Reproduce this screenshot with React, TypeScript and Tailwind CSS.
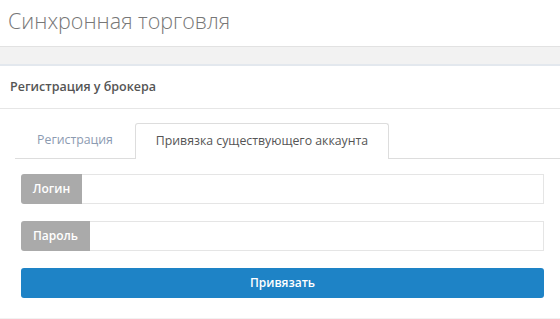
import React from 'react';

const App: React.FC = () => {
    return (
        <div className="w-[560px] h-[319px] overflow-hidden bg-white font-['Open_Sans',sans-serif]">
            <div className="h-[46px] pl-[8px] pt-[6px]">
                <h1 className="text-[21.5px] leading-[30px] font-light text-[#777]">Синхронная торговля</h1>
            </div>
            <div className="h-[20px] bg-[#f2f2f2] border-t border-[#e2e2e2] border-b-2 border-b-[#e3e8ee]"></div>
            <div className="bg-white">
                <div className="h-[43px] pl-[10px] flex items-center border-b border-[#e6e6e6]">
                    <span className="text-[12.5px] font-semibold text-[#555]">Регистрация у брокера</span>
                </div>
                <div className="pl-[15px] pt-[14px] h-[209px]">
                    <div className="flex items-end h-[36px] border-b border-[#dddddd]">
                        <div className="w-[120px] h-[35px] flex items-center justify-center text-[12.3px] text-[#8c9bb1]">
                            Регистрация
                        </div>
                        <div className="w-[254px] h-[36px] -mb-px flex items-center justify-center text-[12.3px] text-[#555] bg-white border border-b-0 border-[#dddddd] rounded-t-[3px]">
                            Привязка существующего аккаунта
                        </div>
                    </div>
                    <div className="pl-[6px] w-[529px] pt-[15px] flex flex-col gap-[17px]">
                        <div className="flex h-[30px]">
                            <div className="w-[61px] bg-[#aaaaaa] text-white text-[12px] font-semibold flex items-center justify-center rounded-l-[3px]">Логин</div>
                            <input className="flex-1 border border-l-0 border-[#e5e5e5] outline-none" />
                        </div>
                        <div className="flex h-[30px]">
                            <div className="w-[69px] bg-[#aaaaaa] text-white text-[12px] font-semibold flex items-center justify-center rounded-l-[3px]">Пароль</div>
                            <input type="password" className="flex-1 border border-l-0 border-[#e5e5e5] outline-none" />
                        </div>
                        <button className="h-[30px] bg-[#1e83c6] text-white text-[12px] font-semibold rounded-[3px]">Привязать</button>
                    </div>
                </div>
            </div>
            <div className="h-[2px] bg-[#f2f2f2]"></div>
        </div>
    );
};

export default App;
